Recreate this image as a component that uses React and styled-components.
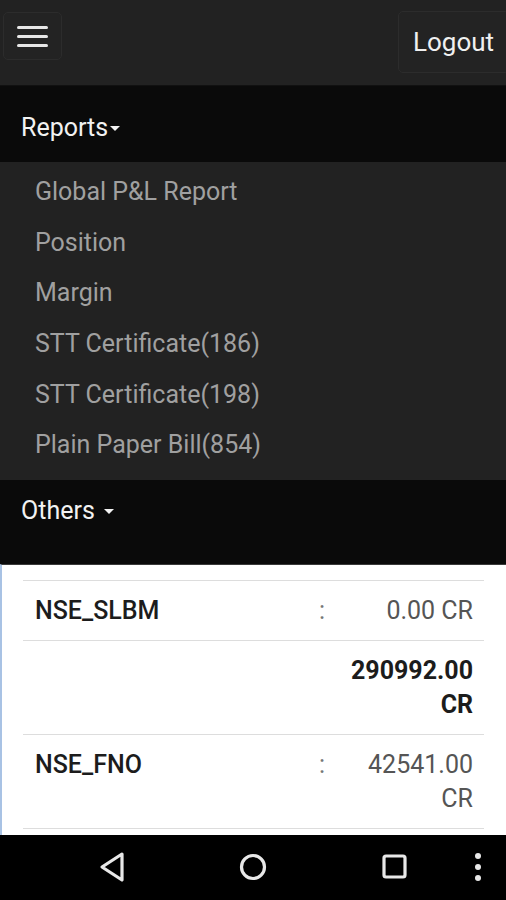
import React from "react";
import styled, { createGlobalStyle } from "styled-components";

const Global = createGlobalStyle`
  html, body { margin: 0; padding: 0; background: #0a0a0a; }
  body { font-family: Roboto, "Noto Sans", "Liberation Sans", sans-serif; }
  * { box-sizing: border-box; }
`;

const Screen = styled.div`
  width: 506px;
  height: 900px;
  display: flex;
  flex-direction: column;
  background: #0a0a0a;
  overflow: hidden;
`;

const TopBar = styled.header`
  height: 86px;
  flex: none;
  background: #222222;
  border-bottom: 1px solid #111;
  display: flex;
  justify-content: space-between;
  align-items: flex-start;
  padding: 12px 0 0 3px;
`;

const IconButton = styled.button`
  width: 59px;
  height: 48px;
  background: #232323;
  border: 1px solid #2c2c2c;
  border-radius: 5px;
  display: flex;
  flex-direction: column;
  justify-content: center;
  align-items: center;
  gap: 6px;
  padding: 0;
`;

const Bar = styled.span`
  display: block;
  width: 31px;
  height: 3px;
  border-radius: 2px;
  background: #e6e6e6;
`;

const LogoutButton = styled.button`
  height: 62px;
  margin-top: -1px;
  width: 112px;
  margin-right: -4px;
  background: #232323;
  border: 1px solid #2c2c2c;
  border-radius: 5px;
  color: #f0f0f0;
  font-family: inherit;
  font-size: 26px;
  text-align: left;
  padding: 0 0 0 14px;
`;

const SectionHeader = styled.div`
  height: ${(p) => p.$h}px;
  flex: none;
  background: #0a0a0a;
  color: #f2f2f2;
  font-size: 25px;
  display: flex;
  align-items: center;
  padding: ${(p) => p.$pt}px 0 0 21px;
  gap: ${(p) => p.$gap}px;
`;

const Caret = styled.span`
  display: inline-block;
  width: 0;
  height: 0;
  border-left: 5px solid transparent;
  border-right: 5px solid transparent;
  border-top: 5px solid #f2f2f2;
  margin-top: 3px;
`;

const Dropdown = styled.ul`
  list-style: none;
  margin: 0;
  padding: 4px 0 10px;
  background: #222222;
  flex: none;
`;

const MenuItem = styled.li`
  height: 50.7px;
  display: flex;
  align-items: center;
  padding-left: 35px;
  color: #a0a0a0;
  font-size: 25px;
`;

const Panel = styled.section`
  flex: 1;
  min-height: 0;
  margin-top: 24px;
  background: #fff;
  border-left: 2px solid #a8c2e4;
  border-top: 1px solid #3a3a3a;
  padding: 15px 22px 0 21px;
  overflow: hidden;
`;

const Table = styled.div`
  display: grid;
  grid-template-columns: 1fr 29px 139px;
`;

const Cell = styled.div`
  border-top: 1px solid #dddddd;
  padding: 13px 11px 12px 0;
  line-height: 34px;
  font-size: 25px;
  color: ${(p) => (p.$bold ? "#1c1c1c" : "#555")};
  font-weight: ${(p) => (p.$bold ? 700 : 400)};
  text-align: right;
`;

const LabelCell = styled(Cell)`
  color: #1c1c1c;
  font-weight: 500;
  text-align: left;
  padding-left: 12px;
`;

const ColonCell = styled(Cell)`
  color: #777;
  text-align: left;
  padding-left: 3px;
  padding-right: 0;
`;

const SysNav = styled.nav`
  height: 65px;
  flex: none;
  background: #000;
  display: grid;
  grid-template-columns: 113px 140px 141px 85px 27px;
  align-items: center;
  padding-bottom: 2px;
`;

const NavIcon = styled.span`
  display: flex;
  justify-content: flex-end;
  transform: translateX(${(p) => p.$shift}px);
`;

const rows = [
  { label: "NSE_SLBM", value: "0.00 CR", colon: true },
  { label: "", value: "290992.00 CR", colon: false, bold: true },
  { label: "NSE_FNO", value: "42541.00 CR", colon: true },
  { label: "", value: "", colon: false },
];

const menu = [
  "Global P&L Report",
  "Position",
  "Margin",
  "STT Certificate(186)",
  "STT Certificate(198)",
  "Plain Paper Bill(854)",
];

export default function App() {
  return (
    <Screen>
      <Global />
      <TopBar>
        <IconButton aria-label="menu">
          <Bar />
          <Bar />
          <Bar />
        </IconButton>
        <LogoutButton>Logout</LogoutButton>
      </TopBar>
      <SectionHeader $h={76} $pt={6} $gap={2}>
        Reports<Caret />
      </SectionHeader>
      <Dropdown>
        {menu.map((m) => (
          <MenuItem key={m}>{m}</MenuItem>
        ))}
      </Dropdown>
      <SectionHeader $h={60} $pt={0} $gap={9}>
        Others<Caret />
      </SectionHeader>
      <Panel>
        <Table>
          {rows.map((r, i) => (
            <React.Fragment key={i}>
              <LabelCell>{r.label}</LabelCell>
              <ColonCell>{r.colon ? ":" : ""}</ColonCell>
              <Cell $bold={r.bold}>{r.value}</Cell>
            </React.Fragment>
          ))}
        </Table>
      </Panel>
      <SysNav>
        <NavIcon $shift={13}>
          <svg width="28" height="32" viewBox="0 0 28 32">
            <path d="M24 3 L4 16 L24 29 Z" fill="none" stroke="#e8e8e8" strokeWidth="3.2" strokeLinejoin="round" />
          </svg>
        </NavIcon>
        <NavIcon $shift={14}>
          <svg width="28" height="28" viewBox="0 0 28 28">
            <circle cx="14" cy="14" r="11.5" fill="none" stroke="#e8e8e8" strokeWidth="3.2" />
          </svg>
        </NavIcon>
        <NavIcon $shift={13}>
          <svg width="25" height="25" viewBox="0 0 25 25">
            <rect x="2" y="2" width="21" height="21" rx="2" fill="none" stroke="#e8e8e8" strokeWidth="3.2" />
          </svg>
        </NavIcon>
        <NavIcon $shift={3}>
          <svg width="8" height="30" viewBox="0 0 8 30">
            <circle cx="4" cy="4" r="3" fill="#e8e8e8" />
            <circle cx="4" cy="15" r="3" fill="#e8e8e8" />
            <circle cx="4" cy="26" r="3" fill="#e8e8e8" />
          </svg>
        </NavIcon>
        <span />
      </SysNav>
    </Screen>
  );
}
